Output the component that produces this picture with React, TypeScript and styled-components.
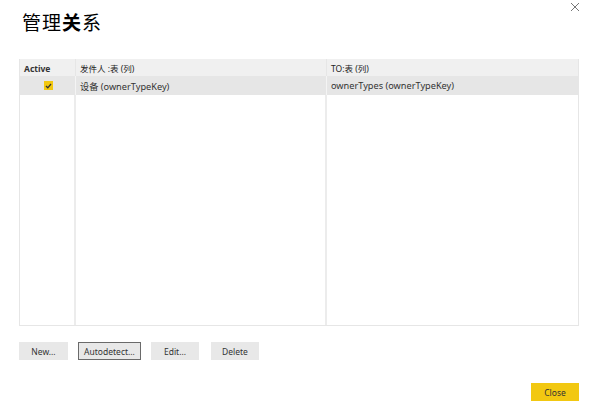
import React from "react";
import styled, { createGlobalStyle } from "styled-components";

const GlobalStyle = createGlobalStyle`
  html, body {
    margin: 0;
    padding: 0;
    background: #fff;
  }
  body {
    font-family: "Noto Sans", "Noto Sans CJK SC", sans-serif;
  }
`;

const Dialog = styled.div`
  position: relative;
  width: 600px;
  height: 409px;
  box-sizing: border-box;
  padding: 9px 21px 0 19px;
  display: flex;
  flex-direction: column;
`;

const Title = styled.h1`
  margin: 0 0 0 3px;
  font-family: "Noto Sans CJK SC", sans-serif;
  font-size: 19px;
  font-weight: 400;
  line-height: 26px;
  color: #000;
  letter-spacing: 1px;
  b {
    font-weight: 700;
  }
`;

const CloseX = styled.button`
  position: absolute;
  top: 2px;
  right: 20px;
  width: 10px;
  height: 10px;
  padding: 0;
  border: none;
  background: none;
  display: flex;
`;

const Grid = styled.div`
  margin-top: 24px;
  height: 266px;
  display: grid;
  grid-template-columns: 56px 251px 1fr;
  grid-template-rows: 17px 19px 1fr;
  border: 1px solid #e6e6e6;
  border-top: none;
`;

const HeadCell = styled.div<{ $last?: boolean }>`
  background: #f0f0f0;
  border-right: ${(p) => (p.$last ? "none" : "1px solid #e6e6e6")};
  font-size: 8.5px;
  color: #222;
  display: flex;
  align-items: center;
  padding-left: 4px;
  padding-top: 1px;
  font-family: "Noto Sans", "Noto Sans CJK SC", sans-serif;
`;

const ActiveHead = styled(HeadCell)`
  font-weight: 700;
  color: #333;
`;

const RowCell = styled.div<{ $last?: boolean; $center?: boolean }>`
  background: #e6e6e6;
  border-right: ${(p) => (p.$last ? "none" : "1px solid #f4f4f4")};
  display: flex;
  align-items: center;
  justify-content: ${(p) => (p.$center ? "center" : "flex-start")};
  padding-left: ${(p) => (p.$center ? "0" : "4px")};
  font-size: 9.2px;
  color: #333;
`;

const EmptyCell = styled.div<{ $last?: boolean }>`
  border-right: ${(p) => (p.$last ? "none" : "2px solid #ececec")};
`;

const Check = styled.span`
  width: 9px;
  height: 9px;
  background: #f2c811;
  display: flex;
  align-items: center;
  justify-content: center;
  margin-left: 2px;
`;

const ButtonRow = styled.div`
  margin-top: 16px;
  display: flex;
  gap: 10px;
`;

const Btn = styled.button<{ $w: number; $focus?: boolean; $gap?: number }>`
  width: ${(p) => p.$w}px;
  height: 18px;
  padding: 0;
  margin-left: ${(p) => p.$gap ?? 0}px;
  background: #e8e8e8;
  border: 1px solid ${(p) => (p.$focus ? "#6a6a6a" : "#e8e8e8")};
  font-family: "Noto Sans", sans-serif;
  font-size: 8.5px;
  color: #333;
`;

const Footer = styled.div`
  margin-top: 23px;
  display: flex;
  justify-content: flex-end;
`;

const CloseBtn = styled.button`
  width: 48px;
  height: 18px;
  padding: 0;
  background: #f2c811;
  border: none;
  font-family: "Noto Sans", sans-serif;
  font-size: 8.5px;
  color: #333;
`;

const App: React.FC = () => (
  <>
    <GlobalStyle />
    <Dialog>
      <Title>
        管理<b>关</b>系
      </Title>
      <CloseX aria-label="close">
        <svg width="10" height="10" viewBox="0 0 10 10">
          <path d="M1 1L9 9M9 1L1 9" stroke="#777" strokeWidth="1" />
        </svg>
      </CloseX>
      <Grid>
        <ActiveHead>Active</ActiveHead>
        <HeadCell>发件人 :表 (列)</HeadCell>
        <HeadCell $last>TO:表 (列)</HeadCell>
        <RowCell $center>
          <Check>
            <svg width="7" height="6" viewBox="0 0 7 6">
              <path d="M1 3L2.8 4.8L6 1" stroke="#333" strokeWidth="1.3" fill="none" />
            </svg>
          </Check>
        </RowCell>
        <RowCell>设备 (ownerTypeKey)</RowCell>
        <RowCell $last>ownerTypes (ownerTypeKey)</RowCell>
        <EmptyCell />
        <EmptyCell />
        <EmptyCell $last />
      </Grid>
      <ButtonRow>
        <Btn $w={49}>New...</Btn>
        <Btn $w={63} $focus>Autodetect...</Btn>
        <Btn $w={48}>Edit...</Btn>
        <Btn $w={48} $gap={2}>Delete</Btn>
      </ButtonRow>
      <Footer>
        <CloseBtn>Close</CloseBtn>
      </Footer>
    </Dialog>
  </>
);

export default App;
